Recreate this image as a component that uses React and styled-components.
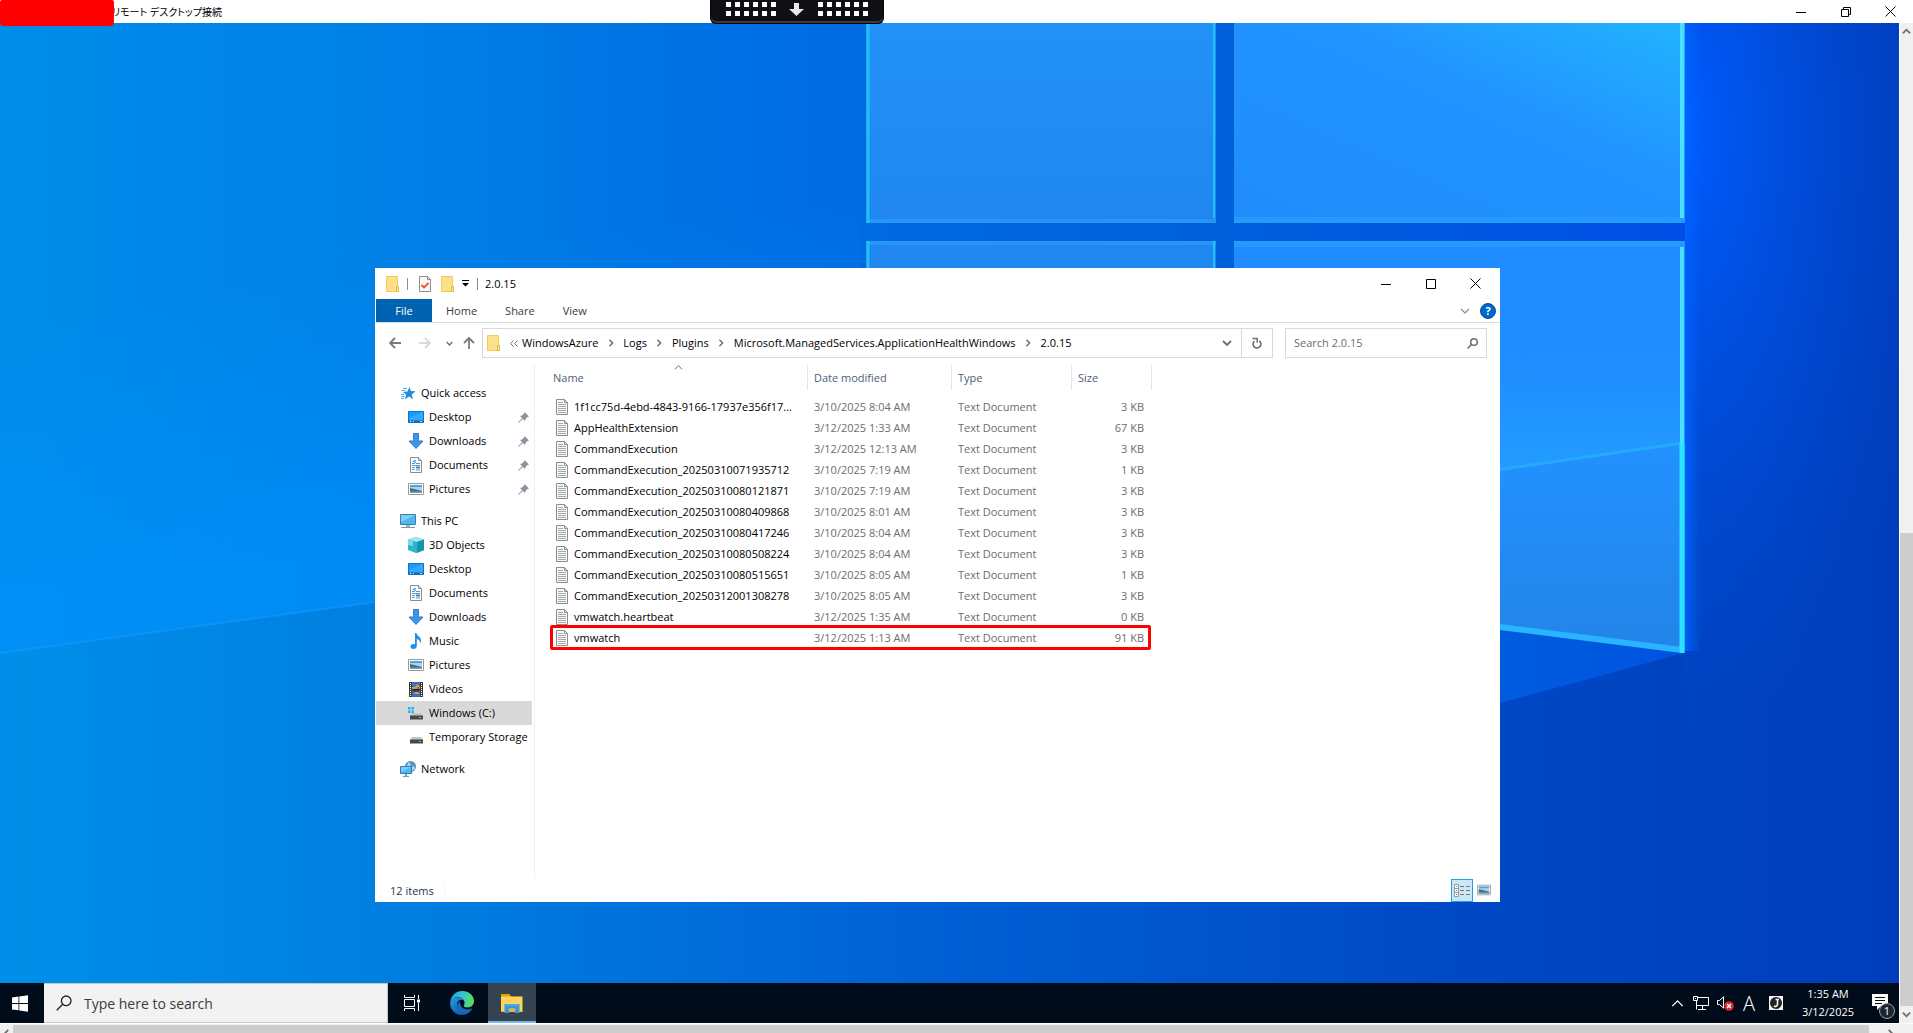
import React from 'react';
import styled, { createGlobalStyle } from 'styled-components';

const GlobalStyle = createGlobalStyle`
  * {
    box-sizing: border-box;
  }

  body {
    margin: 0;
    overflow: hidden;
    font-family: "Open Sans", "Noto Sans", sans-serif;
    font-size: 11px;
    color: #000;
  }

  button, input {
    margin: 0;
    padding: 0;
    border: 0;
    background: none;
    font: inherit;
    color: inherit;
  }

  svg {
    display: block;
    flex: none;
  }
`;

const Client = styled.div`
  display: flex;
  flex-direction: column;
  height: 100vh;
  background: #fff;
`;

const ClientTitleBar = styled.header`
  position: relative;
  display: flex;
  align-items: center;
  height: 23px;
  flex: none;
`;

const Redaction = styled.div`
  position: absolute;
  z-index: 2;
  top: 0;
  left: 0;
  width: 114px;
  height: 26px;
  border-radius: 2px 2px 4px 4px;
  background: #f00;
`;

const ClientTitle = styled.h1`
  flex: 1;
  margin: 0;
  padding-left: 112px;
  font-family: "Open Sans", "Noto Sans CJK JP", sans-serif;
  font-feature-settings: "palt";
  font-size: 10px;
  font-weight: 400;
  line-height: 16px;
`;

const ConnectionBar = styled.div`
  position: absolute;
  z-index: 2;
  top: 0;
  left: calc(50% - 247px);
  display: flex;
  align-items: center;
  justify-content: space-between;
  width: 174px;
  height: 24px;
  padding: 0 15px 5px;
  border: 1px solid #05050a;
  border-top: 0;
  border-radius: 0 0 6px 6px;
  background: #101014;
  box-shadow: inset 0 -2px 0 #3c3c40;
`;

const CaptionButton = styled.button`
  display: flex;
  align-items: center;
  justify-content: center;
  width: 45px;
  height: 100%;
`;

const ClientBody = styled.div`
  display: flex;
  flex: 1;
  min-height: 0;
`;

const Session = styled.div`
  display: flex;
  flex-direction: column;
  flex: 1;
  min-width: 0;
`;

const VerticalScroll = styled.div`
  display: flex;
  flex-direction: column;
  width: 14px;
  padding-left: 1px;
  background: #fff;
`;

const HorizontalScroll = styled.div`
  display: flex;
  height: 10px;
  flex: none;
  padding: 1px 14px 0 0;
  overflow: hidden;
  background: #f0f0f0;
  border-top: 1px solid #fff;
`;

const ScrollButton = styled.button`
  display: flex;
  align-items: center;
  justify-content: center;
  flex: none;
  width: ${props => props.$width || '13px'};
  height: 17px;
  background: #f0f0f0;
`;

const Track = styled.div`
  flex: ${props => props.$grow};
  background: #f0f0f0;
`;

const Thumb = styled.div`
  flex: ${props => props.$grow};
  background: #cdcdcd;
`;

const Desktop = styled.main`
  position: relative;
  flex: 1;
  overflow: hidden;
  background: #0078e4;
`;

const WallpaperArt = styled.svg`
  position: absolute;
  width: 100%;
  height: 100%;
`;

const ExplorerWindow = styled.section`
  position: absolute;
  top: 245px;
  left: 375px;
  display: flex;
  flex-direction: column;
  width: 1125px;
  height: 634px;
  background: #fff;
`;

const WindowTitleBar = styled.div`
  display: flex;
  align-items: center;
  height: 31px;
  padding-left: 11px;
`;

const QuickTools = styled.div`
  display: flex;
  align-items: center;
  gap: 8px;
`;

const Divider = styled.span`
  width: 1px;
  height: 12px;
  background: #8c8c8c;
`;

const WindowTitle = styled.h2`
  flex: 1;
  margin: 0 0 0 7px;
  font-size: 11px;
  font-weight: 400;
`;

const Captions = styled.div`
  display: flex;
  height: 100%;
  padding-right: 2px;
`;

const Ribbon = styled.nav`
  display: flex;
  height: 24px;
  padding-left: 1px;
  border-bottom: 1px solid #dadbdc;
`;

const RibbonTab = styled.button`
  height: 23px;
  padding: 0 14px;
  color: #3b3b3b;
`;

const FileTab = styled(RibbonTab)`
  width: 56px;
  background: #0063b1;
  color: #fff;
`;

const RibbonTools = styled.div`
  display: flex;
  align-items: center;
  gap: 10px;
  margin-left: auto;
  padding-right: 4px;
`;

const HelpButton = styled.button`
  width: 16px;
  height: 16px;
  border: 1px solid #0a4a9c;
  border-radius: 50%;
  background: #0066cc;
  color: #fff;
  font-weight: 700;
  line-height: 14px;
`;

const NavigationBar = styled.div`
  display: flex;
  padding: 5px 13px 7px 5px;
`;

const NavButton = styled.button`
  display: flex;
  align-items: center;
  justify-content: center;
  width: ${props => props.$width};
`;

const AddressBar = styled.div`
  display: flex;
  align-items: center;
  flex: 1;
  height: 30px;
  margin: 0 12px 0 2px;
  padding-left: 4px;
  border: 1px solid #d9d9d9;
`;

const Crumbs = styled.div`
  display: flex;
  align-items: center;
  flex: 1;
  padding-left: 6px;

  button {
    padding-bottom: 2px;
  }
`;

const CrumbArrow = styled.span`
  display: flex;
  justify-content: center;
  width: ${props => props.$first ? '16px' : '25px'};
`;

const RefreshButton = styled.button`
  display: flex;
  align-items: center;
  justify-content: center;
  width: 31px;
  height: 28px;
  border-left: 1px solid #d9d9d9;
`;

const SearchBox = styled.label`
  display: flex;
  align-items: center;
  width: 202px;
  height: 30px;
  padding: 0 8px;
  border: 1px solid #d9d9d9;

  input {
    flex: 1;
    min-width: 0;
    padding-bottom: 2px;
    outline: 0;
  }

  input::placeholder {
    color: #6d6d6d;
  }
`;

const WindowBody = styled.div`
  display: flex;
  flex: 1;
  min-height: 0;
`;

const Sidebar = styled.aside`
  display: flex;
  flex-direction: column;
  gap: 8px;
  width: 160px;
  padding: 16px 2px 0 1px;
  border-right: 1px solid #f0f0f0;
`;

const SidebarItem = styled.button`
  display: flex;
  align-items: center;
  gap: 5px;
  width: 156px;
  height: 24px;
  padding: 0 3px 0 ${props => props.$nested ? '32px' : '24px'};
  background: ${props => props.$selected ? '#d9d9d9' : 'none'};
  white-space: nowrap;
  text-align: left;

  span {
    flex: 1;
    padding-bottom: 2px;
  }
`;

const FileArea = styled.div`
  flex: 1;
  padding-left: 15px;
`;

const FileTable = styled.table`
  width: 601px;
  border-collapse: separate;
  border-spacing: 0;
  table-layout: fixed;

  th {
    padding: 0 0 6px;
    font-weight: 400;
  }

  td {
    height: 21px;
    padding: 0 7px;
    color: #6d6d6d;
    line-height: 16px;
    white-space: nowrap;
  }

  td:last-child {
    text-align: right;
  }
`;

const ColumnButton = styled.button`
  position: relative;
  width: 100%;
  height: 25px;
  padding-left: ${props => props.$first ? '3px' : '7px'};
  box-shadow: 1px 0 #e5e5e5;
  color: #4c607a;
  text-align: left;

  svg {
    position: absolute;
    top: -2px;
    left: 124px;
  }
`;

const FileRow = styled.tr`
  position: relative;

  &::after {
    content: "";
    display: ${props => props.$marked ? 'block' : 'none'};
    position: absolute;
    inset: -2px 0;
    border: 3px solid #f00;
    border-radius: 2px;
  }
`;

const FileName = styled.div`
  display: flex;
  align-items: center;
  gap: 6px;
  margin-left: -1px;
  color: #000;
`;

const StatusBar = styled.footer`
  display: flex;
  align-items: center;
  height: 24px;
  padding: 0 5px 0 15px;
  color: #26364d;
`;

const ItemCount = styled.span`
  padding-right: 10px;
  border-right: 1px solid #f5f5f5;
`;

const ViewButton = styled.button`
  display: flex;
  align-items: center;
  justify-content: center;
  width: 22px;
  height: 23px;
  border: 1px solid ${props => props.$active ? '#26a0da' : 'transparent'};
  background: ${props => props.$active ? '#cbe8f6' : 'none'};

  &:first-of-type {
    margin-left: auto;
  }
`;

const Taskbar = styled.footer`
  display: flex;
  height: 40px;
  flex: none;
  background: #000c1a;
  color: #fff;
`;

const TaskButton = styled.button`
  display: flex;
  align-items: center;
  justify-content: center;
  width: ${props => props.$width || '48px'};
  border-bottom: 2px solid ${props => props.$active ? '#76b9ed' : 'transparent'};
  border-top: 2px solid transparent;
  background: ${props => props.$active ? '#34434f' : 'none'};
`;

const TaskSearch = styled.label`
  display: flex;
  align-items: center;
  gap: 12px;
  width: 344px;
  margin-left: 4px;
  padding-left: 12px;
  border: 1px solid #c4c8cc;
  border-left: 0;
  background: #f2f2f2;

  input {
    flex: 1;
    outline: 0;
    font-size: 14px;
  }

  input::placeholder {
    color: #3b3b3b;
    opacity: 1;
  }
`;

const Tray = styled.div`
  display: flex;
  align-items: center;
  margin-left: auto;
  padding-right: 11px;
`;

const TrayButton = styled.button`
  display: flex;
  align-items: center;
  justify-content: center;
  width: ${props => props.$width || '24px'};
  height: 100%;
`;

const ImeMode = styled(TrayButton)`
  font-size: 20px;
  font-weight: 300;
`;

const Clock = styled.time`
  width: 74px;
  line-height: 18px;
  text-align: center;
`;

const Notifications = styled.button`
  position: relative;
  height: 100%;
  padding: 0 0 2px 7px;
`;

const Badge = styled.span`
  position: absolute;
  right: -7px;
  bottom: 4px;
  width: 16px;
  height: 16px;
  border: 1px solid #9aa0a6;
  border-radius: 50%;
  background: #1d242c;
  line-height: 14px;
`;

const Chevron = ({ direction = 'down', size = 10, color = '#6d6d6d', weight = 1.5 }) => {
  const points = {
    down: '1,3 5,7 9,3',
    up: '1,7 5,3 9,7',
    left: '7,1 3,5 7,9',
    right: '3,1 7,5 3,9',
  };
  return (
    <svg width={size} height={size} viewBox="0 0 10 10" fill="none" stroke={color} strokeWidth={weight}>
      <polyline points={points[direction]} />
    </svg>
  );
};

const MinimizeIcon = () => (
  <svg width="10" height="10" viewBox="0 0 10 10"><path d="M0 5h10v1H0z" /></svg>
);

const MaximizeIcon = () => (
  <svg width="10" height="10" viewBox="0 0 10 10" fill="none" stroke="#000"><path d="M.5.5h9v9h-9z" /></svg>
);

const RestoreIcon = () => (
  <svg width="10" height="10" viewBox="0 0 10 10" fill="none" stroke="#000">
    <path d="M.5 2.500h7v7h-7zM2.500 2.500v-2h7v7h-2" />
  </svg>
);

const CloseIcon = () => (
  <svg width="11" height="11" viewBox="0 0 11 11" fill="none" stroke="#000"><path d="M.5.5l10 10M10.500.5l-10 10" /></svg>
);

const Grip = () => (
  <svg width="50" height="14" viewBox="0 0 50 14" fill="#fff">
    {[0, 9, 18, 27, 36, 45].map(x => (
      <path key={x} d={`M${x} 0h5v5h-5zM${x} 9h5v5h-5z`} />
    ))}
  </svg>
);

const FolderIcon = () => (
  <svg width="13" height="16" viewBox="0 0 13 16">
    <path d="M.5.5h11v15H.5z" fill="#ffe08a" stroke="#f0cb58" />
    <path d="M10.500 10.500h2v5h-2z" fill="#ffe9a6" stroke="#e3b93e" />
  </svg>
);

const PropertiesIcon = () => (
  <svg width="17" height="16" viewBox="-3 0 17 16">
    <path d="M.5.5h8l3 3v12H.5z" fill="#f8f8f8" stroke="#8c8c8c" />
    <path d="M8.500.5v3h3" fill="none" stroke="#8c8c8c" />
    <path d="M2.500 9l2.500 2.500 4.500-4.500" fill="none" stroke="#e8561c" strokeWidth="1.800" />
  </svg>
);

const ToolbarMenuIcon = () => (
  <svg width="7" height="7" viewBox="0 0 7 7"><path d="M0 0h7v1H0zM0 3h7L3.500 6.500z" /></svg>
);

const ArrowIcon = ({ rotate = 0, color = '#7a7a7a' }) => (
  <svg width="12" height="12" viewBox="0 0 12 12" fill="none" stroke={color} strokeWidth="1.800">
    <path d="M12 6H1.500M6 1L1 6l5 5" transform={`rotate(${rotate} 6 6)`} />
  </svg>
);

const DoubleChevron = () => (
  <svg width="8" height="7" viewBox="0 0 8 7" fill="none" stroke="#6d6d6d">
    <path d="M3.500.5l-3 3 3 3M7.500.5l-3 3 3 3" />
  </svg>
);

const RefreshIcon = () => (
  <svg width="10" height="12" viewBox="0 0 10 12" fill="none" stroke="#707070" strokeWidth="1.700">
    <path d="M7.300 3.900A3.900 3.900 0 1 1 2.400 4.100" />
    <path d="M.5 1.500h4.700v4.300" strokeWidth="1.500" />
  </svg>
);

const MagnifierIcon = ({ size = 11, color = '#6d6d6d', weight = 1.5 }) => (
  <svg width={size} height={size} viewBox="0 0 11 11" fill="none" stroke={color} strokeWidth={weight}>
    <circle cx="7" cy="4" r="3.300" />
    <path d="M4.600 6.400L.5 10.500" />
  </svg>
);

const StarIcon = () => (
  <svg width="16" height="16" viewBox="0 0 16 16">
    <path d="M9.500 2l1.400 4 4.600.2-3.700 3.200 1.200 4.800L9 11.500l-4.200 3 1.300-4.700L3 7l4.400-.6z" fill="#1f8de0" />
    <path d="M3 3.500h4M1.500 5.500h4M1 9.500h3M1.500 11.500h3M1 13.500h3" stroke="#58aee8" />
  </svg>
);

const DesktopIcon = () => (
  <svg width="16" height="16" viewBox="0 0 16 16">
    <path d="M.5 2.500h15v11H.5z" fill="#1a9bff" stroke="#0a73c9" />
    <path d="M1 9l14-6v8.500H1z" fill="#35aaff" />
    <path d="M1 11.500h14v1.500H1z" fill="#0d69b8" />
    <path d="M2 12.500h1.500M5 12.500h1M12 12.500h2" stroke="#bfe2ff" />
  </svg>
);

const DownloadIcon = () => (
  <svg width="16" height="16" viewBox="0 0 16 16">
    <path d="M5.500.5h5v7.500h4.500L8 15.500 1 8h4.500z" fill="#3c96e4" stroke="#2c80cc" />
  </svg>
);

const DocumentIcon = () => (
  <svg width="16" height="16" viewBox="0 0 16 16">
    <path d="M2.500.5h8l3 3v12h-11z" fill="#fff" stroke="#8c8c8c" />
    <path d="M10.500.5v3h3" fill="#ddd" stroke="#8c8c8c" />
    <path d="M4 6.500h3M8 6.500h4M4 8.500h8M4 10.500h3M4 12.500h3" stroke="#4a9fe0" />
    <path d="M5 5l2-2v3" fill="none" stroke="#2b83cc" />
    <path d="M8 9.500h4v2H8z" fill="#4a7fb4" />
    <path d="M8 13h4" stroke="#8c8c8c" />
  </svg>
);

const PictureIcon = ({ width = 16 }) => (
  <svg width={width} height={width} viewBox="0 0 16 16">
    <path d="M.5 2.500h15v11H.5z" fill="#fff" stroke="#9a9a9a" />
    <path d="M2 4h12v8H2z" fill="#a9d3f5" />
    <path d="M2 4h12v2H2z" fill="#5a9fe0" />
    <path d="M2 7l4 1 8 2v2H2z" fill="#45735f" />
    <path d="M2 10.500h12V12H2z" fill="#6fa3c8" />
  </svg>
);

const ComputerIcon = () => (
  <svg width="16" height="16" viewBox="0 0 16 16">
    <path d="M.5 1.500h15v10H.5z" fill="#4fb4f0" stroke="#3a7fae" />
    <path d="M1 2h14L1 9z" fill="#80cdf8" />
    <path d="M6 12h4v2H6z" fill="#9bb4c4" />
    <path d="M1 14.500h14" stroke="#7f98a8" />
  </svg>
);

const CubeIcon = () => (
  <svg width="16" height="16" viewBox="0 0 16 16">
    <path d="M8 0l8 2.500v10.500L8 16 0 13V2.500z" fill="#2db5cc" />
    <path d="M8 0l8 2.500L9 5 0 2.500z" fill="#a5e8f0" />
    <path d="M9 5l7-2.500V13l-7 3z" fill="#1593ae" />
    <path d="M0 2.500L5 4v5L0 8z" fill="#79d8e4" />
  </svg>
);

const MusicIcon = () => (
  <svg width="16" height="16" viewBox="0 0 16 16" fill="#1e90e6">
    <path d="M7 0h1.500c.5 3 4.500 3.500 4.500 7.500 0 1-.4 2-1 3 .3-2.500-1-4-3.200-4.500V13c0 1.800-1.500 3-3.500 3S2.500 15 2.500 13.500 4 11 5.500 11c.6 0 1.100.1 1.500.3z" />
  </svg>
);

const VideoIcon = () => (
  <svg width="16" height="16" viewBox="0 0 16 16">
    <path d="M1 1h14v15H1z" fill="#3c3c3c" />
    <path d="M4 1h8v15H4z" fill="#3d6cc0" />
    <path d="M4 6h3l2-3 3 3v2H4zM6 12l3-2 3 3H7z" fill="#d9a23a" />
    <path d="M5 9h6v2H5z" fill="#33406b" />
    <path d="M9 6h2v3H9z" fill="#c9473a" />
    <path d="M2.500 2v14M13.500 2v14" stroke="#fff" strokeDasharray="1 1" />
    <path d="M4 8.500h8" stroke="#1e1e1e" />
  </svg>
);

const DriveIcon = ({ system }) => (
  <svg width="16" height="16" viewBox="0 0 16 16">
    {system && <path d="M0 2h2.500v2.500H0zM3.500 2H6v2.500H3.500zM0 5.500h2.500V8H0zM3.500 5.500H6V8H3.500z" fill="#1eb4f0" />}
    <path d="M4 8h9l2 3H2z" fill="#c4c4c4" />
    <path d="M2 10.500h13v4H2z" fill="#484848" />
    <path d="M11 12.500h2" stroke="#4fd66c" />
  </svg>
);

const NetworkIcon = () => (
  <svg width="16" height="16" viewBox="0 0 16 16">
    <circle cx="10.500" cy="5.500" r="5.500" fill="#5b92b8" />
    <path d="M8 1.500l3 1-1 2.500-3 .5zM11 6l3-1 1 3-3 2z" fill="#b4d8ea" />
    <path d="M.5 5.500h11v7H.5z" fill="#4fb8f4" stroke="#2d7db4" />
    <path d="M1 6h10l-10 5z" fill="#7fd0fa" />
    <path d="M5 13h2v2H5zM3 15h6v1H3z" fill="#7f98a8" />
  </svg>
);

const PinIcon = () => (
  <svg width="11" height="11" viewBox="0 0 11 11" fill="#8a949e">
    <path d="M6.500 0L11 4.500 9.500 5 7.500 7 7 9 4.800 6.900.5 11 0 10.500 4.100 6.200 2 4l2-.5 2-2z" />
  </svg>
);

const TextFileIcon = () => (
  <svg width="12" height="16" viewBox="0 0 12 16">
    <path d="M.5.5h8l3 3v12H.5z" fill="#fafafa" stroke="#8c8c8c" />
    <path d="M8.500.5v3h3" fill="none" stroke="#8c8c8c" />
    <path d="M2 3.500h5M2 5.500h8M2 7.500h8M2 9.500h8M2 11.500h8M2 13.500h8" stroke="#a6a6a6" />
  </svg>
);

const DetailsViewIcon = () => (
  <svg width="16" height="13" viewBox="0 0 16 13" fill="none">
    <path d="M.5.5h4v12h-4zM.5 4.500h4M.5 8.500h4" fill="#fff" stroke="#8f9aa1" />
    <path d="M2 2.500h1M2 6.500h1" stroke="#4a90c8" />
    <path d="M2 10.500h1" stroke="#c33" />
    <path d="M6 2.500h4M12 2.500h4M6 6.500h4M12 6.500h4M6 10.500h4M12 10.500h4" stroke="#777" />
  </svg>
);

const WindowsLogo = () => (
  <svg width="16" height="17" viewBox="0 0 16 17" fill="#fff">
    <path d="M0 2.500L6.500 1.600V8H0zM7.300 1.500L16 .2V8H7.300zM0 8.900h6.500v6.400L0 14.400zM7.300 8.900H16v7.900l-8.700-1.300z" />
  </svg>
);

const TaskViewIcon = () => (
  <svg width="16" height="16" viewBox="0 0 16 16" fill="none" stroke="#fff">
    <path d="M.5 0v2.500h10V0M.5 4.500h10v7H.5zM.5 16v-2.500h10V16M14.500 0v4M14.500 8v8" />
    <path d="M13 4.500h3v3h-3z" fill="#fff" stroke="none" />
  </svg>
);

const EdgeIcon = () => (
  <svg width="24" height="24" viewBox="0 0 24 24">
    <defs>
      <linearGradient id="edgeTop" x1="0" y1="0.300" x2="1" y2="0.500">
        <stop offset="0" stopColor="#229fe2" />
        <stop offset="0.500" stopColor="#34c6cf" />
        <stop offset="1" stopColor="#62dc55" />
      </linearGradient>
      <linearGradient id="edgeLeft" x1="0" y1="0" x2="0.700" y2="1">
        <stop offset="0" stopColor="#1ea0e6" />
        <stop offset="1" stopColor="#0f58a8" />
      </linearGradient>
    </defs>
    <path d="M.2 11.200C1 4.500 6 0 12.200 0 19 0 24 4.700 24 10c0 4-3 6.400-6.400 6.400-2.500 0-4-.9-4-1.700 0-.7 1-1 1-3 0-3-3-5.500-6.800-5.500-3.500 0-6.400 2-7.600 5z" fill="url(#edgeTop)" />
    <path d="M.2 11.200c1-3 3.800-5 7.600-5 3 0 5.600 1.500 6.500 3.600-1-.7-2-1-3-1C8.500 8.800 7 11 7 14c0 5 4 9 9 9.200-1.200.5-2.500.8-4 .8C5.300 24-.5 18.500.2 11.200z" fill="url(#edgeLeft)" />
    <path d="M10 10c-2 1.500-3 3.300-3 5.500 0 4.500 4 8 9 7.700 2.500-1 4.800-3 5.800-5 .3-.6-.2-1-.8-.7-5 2.500-11.500-.5-11-7.500z" fill="#1a66bb" />
  </svg>
);

const ExplorerIcon = () => (
  <svg width="22" height="19" viewBox="0 0 22 19">
    <path d="M0 0h8l2 2.500h11.500V18H0z" fill="#ffd35c" />
    <path d="M0 0h8l2 2.500H0z" fill="#e8a200" />
    <path d="M3.500 10h15v9H14v-4.500H8V19H3.500z" fill="#3a96dd" />
    <path d="M3.500 10h15v2h-15z" fill="#4fa8ea" />
    <path d="M0 18h3.500V17H0zM18.500 18h3V17h-3zM8 18h6v-3H8z" fill="#f3b52c" />
  </svg>
);

const MonitorIcon = () => (
  <svg width="16" height="14" viewBox="0 0 16 14" fill="none" stroke="#fff">
    <path d="M5 1.500h10.500v8H3.500V5M.5.5h4v4h-4zM2 2.500h1M9.500 10v3M5 13.500h8M3.500 9v4.500" />
  </svg>
);

const MutedIcon = () => (
  <svg width="17" height="15" viewBox="0 0 17 15">
    <path d="M.5 4.500h2L6.500.8v11.400l-4-3.700h-2z" fill="none" stroke="#fff" />
    <circle cx="12" cy="10" r="4.800" fill="#e0202c" />
    <path d="M10 8l4 4M14 8l-4 4" stroke="#fff" strokeWidth="1.500" />
  </svg>
);

const ImeIcon = () => (
  <svg width="14" height="14" viewBox="0 0 14 14">
    <path d="M0 0h14v14H0z" fill="#f5f5f5" />
    <circle cx="7" cy="7" r="6" fill="#222" />
    <path d="M8.500 3v5.500a2.300 2.300 0 0 1-3.500 1.500M6.500 3.500h3.500" fill="none" stroke="#f5f5f5" strokeWidth="1.600" />
  </svg>
);

const NoticeIcon = () => (
  <svg width="16" height="16" viewBox="0 0 16 16">
    <path d="M0 0h16v12H9l-4 4v-4H0z" fill="#fff" />
    <path d="M3 3.500h10M3 6.500h10M3 9.500h7" stroke="#000c1a" />
  </svg>
);

const Wallpaper = () => (
  <WallpaperArt viewBox="0 0 1899 960" preserveAspectRatio="none" aria-hidden="true">
    <defs>
      <linearGradient id="sky" gradientUnits="userSpaceOnUse" x1="0" y1="0" x2="1685" y2="0">
        <stop offset="0" stopColor="#008de9" />
        <stop offset="0.250" stopColor="#007fe6" />
        <stop offset="0.500" stopColor="#006be3" />
        <stop offset="0.720" stopColor="#0060dc" />
        <stop offset="1" stopColor="#004ee6" />
      </linearGradient>
      <linearGradient id="ground" x1="0" y1="0" x2="1" y2="0">
        <stop offset="0" stopColor="#008fe8" />
        <stop offset="0.250" stopColor="#007bdf" />
        <stop offset="0.500" stopColor="#005fd4" />
        <stop offset="0.780" stopColor="#0048c4" />
        <stop offset="1" stopColor="#003dba" />
      </linearGradient>
      <linearGradient id="beam" gradientUnits="userSpaceOnUse" x1="0" y1="290" x2="39" y2="577">
        <stop offset="0" stopColor="#0092ff" stopOpacity="0" />
        <stop offset="1" stopColor="#0092ff" stopOpacity="0.600" />
      </linearGradient>
      <radialGradient id="glow" gradientUnits="userSpaceOnUse" cx="0" cy="0" r="1" gradientTransform="translate(1685 110) scale(260 620)">
        <stop offset="0" stopColor="#005cff" />
        <stop offset="0.300" stopColor="#0054ee" stopOpacity="0.800" />
        <stop offset="1" stopColor="#004cd8" stopOpacity="0" />
      </radialGradient>
      <linearGradient id="rim" x1="0" y1="0" x2="1" y2="0">
        <stop offset="0" stopColor="#0064ff" stopOpacity="0.800" />
        <stop offset="1" stopColor="#0064ff" stopOpacity="0" />
      </linearGradient>
      <linearGradient id="paneTop" x1="0" y1="1" x2="1" y2="0">
        <stop offset="0" stopColor="#208cfa" />
        <stop offset="0.600" stopColor="#2194ff" />
        <stop offset="1" stopColor="#22b4ff" />
      </linearGradient>
      <linearGradient id="paneLeft" x1="0" y1="0" x2="0" y2="1">
        <stop offset="0" stopColor="#2292f8" />
        <stop offset="1" stopColor="#2086f0" />
      </linearGradient>
      <linearGradient id="paneUpper" x1="0" y1="0" x2="0" y2="1">
        <stop offset="0" stopColor="#208aff" />
        <stop offset="0.500" stopColor="#208eff" />
        <stop offset="1" stopColor="#22a2ff" />
      </linearGradient>
      <linearGradient id="paneLower" x1="0" y1="0" x2="0" y2="1">
        <stop offset="0" stopColor="#2292ff" />
        <stop offset="1" stopColor="#2284e8" />
      </linearGradient>
      <linearGradient id="triangle" x1="0" y1="0" x2="1" y2="0">
        <stop offset="0" stopColor="#0068dc" />
        <stop offset="1" stopColor="#0052e0" />
      </linearGradient>
    </defs>
    <rect width="1899" height="960" fill="url(#ground)" />
    <path d="M0 0H1685V400L0 630z" fill="url(#sky)" />
    <path d="M0 630L860 513V150L0 267z" fill="url(#beam)" />
    <path d="M0 630L860 513" stroke="#1a9cff" strokeWidth="2" opacity="0.500" />
    <rect x="1685" width="214" height="730" fill="url(#glow)" />
    <rect x="1685" width="16" height="628" fill="url(#rim)" />

    <rect x="866" width="350" height="200" fill="url(#paneLeft)" />
    <rect x="866" y="218" width="350" height="380" fill="#2086f0" />
    <rect x="1234" width="451" height="200" fill="url(#paneTop)" />
    <path d="M1234 218h451v201L1234 485z" fill="url(#paneUpper)" />
    <path d="M1234 485L1685 419V630L1234 580z" fill="url(#paneLower)" />
    <path d="M1234 485L1683 420" stroke="#28b0ff" strokeWidth="3" opacity="0.800" />
    <path d="M866 198h350M866 220h350" stroke="#2b9cf8" strokeWidth="4" opacity="0.700" />
    <path d="M1234 197h451M1234 221h451" stroke="#279efc" strokeWidth="6" opacity="0.800" />
    <path d="M868 0v200M868 218v30" stroke="#22c0f8" strokeWidth="3" />
    <path d="M1214 0v195M1214 218v30" stroke="#22c0fa" strokeWidth="2" />
    <path d="M1682 0v195M1682 224v200" stroke="#4ae0ff" strokeWidth="4" />
    <path d="M1300 582L1500 604 1684 627V630L1500 680 1300 735z" fill="url(#triangle)" />
    <path d="M1300 582L1500 604 1682 627" fill="none" stroke="#28b4ff" strokeWidth="6" />
    <path d="M1682 420v210" stroke="#28e4ff" strokeWidth="5" />
  </WallpaperArt>
);

const quickAccess = [
  { name: 'Quick access', icon: <StarIcon /> },
  { name: 'Desktop', icon: <DesktopIcon />, nested: true, pinned: true },
  { name: 'Downloads', icon: <DownloadIcon />, nested: true, pinned: true },
  { name: 'Documents', icon: <DocumentIcon />, nested: true, pinned: true },
  { name: 'Pictures', icon: <PictureIcon />, nested: true, pinned: true },
];

const thisPc = [
  { name: 'This PC', icon: <ComputerIcon /> },
  { name: '3D Objects', icon: <CubeIcon />, nested: true },
  { name: 'Desktop', icon: <DesktopIcon />, nested: true },
  { name: 'Documents', icon: <DocumentIcon />, nested: true },
  { name: 'Downloads', icon: <DownloadIcon />, nested: true },
  { name: 'Music', icon: <MusicIcon />, nested: true },
  { name: 'Pictures', icon: <PictureIcon />, nested: true },
  { name: 'Videos', icon: <VideoIcon />, nested: true },
  { name: 'Windows (C:)', icon: <DriveIcon system />, nested: true, selected: true },
  { name: 'Temporary Storage', icon: <DriveIcon />, nested: true },
];

const network = [{ name: 'Network', icon: <NetworkIcon /> }];

const path = ['WindowsAzure', 'Logs', 'Plugins', 'Microsoft.ManagedServices.ApplicationHealthWindows', '2.0.15'];

const files = [
  ['1f1cc75d-4ebd-4843-9166-17937e356f17...', '3/10/2025 8:04 AM', '3 KB'],
  ['AppHealthExtension', '3/12/2025 1:33 AM', '67 KB'],
  ['CommandExecution', '3/12/2025 12:13 AM', '3 KB'],
  ['CommandExecution_20250310071935712', '3/10/2025 7:19 AM', '1 KB'],
  ['CommandExecution_20250310080121871', '3/10/2025 7:19 AM', '3 KB'],
  ['CommandExecution_20250310080409868', '3/10/2025 8:01 AM', '3 KB'],
  ['CommandExecution_20250310080417246', '3/10/2025 8:04 AM', '3 KB'],
  ['CommandExecution_20250310080508224', '3/10/2025 8:04 AM', '3 KB'],
  ['CommandExecution_20250310080515651', '3/10/2025 8:05 AM', '1 KB'],
  ['CommandExecution_20250312001308278', '3/10/2025 8:05 AM', '3 KB'],
  ['vmwatch.heartbeat', '3/12/2025 1:35 AM', '0 KB'],
  ['vmwatch', '3/12/2025 1:13 AM', '91 KB'],
];

const columns = [
  { name: 'Name', width: 257 },
  { name: 'Date modified', width: 144 },
  { name: 'Type', width: 120 },
  { name: 'Size', width: 80 },
];

const SidebarGroup = ({ items }) => (
  <div>
    {items.map(item => (
      <SidebarItem key={item.name} $nested={item.nested} $selected={item.selected}>
        {item.icon}
        <span>{item.name}</span>
        {item.pinned && <PinIcon />}
      </SidebarItem>
    ))}
  </div>
);

const FileList = () => (
  <FileTable>
    <colgroup>
      {columns.map(column => <col key={column.name} width={column.width} />)}
    </colgroup>
    <thead>
      <tr>
        {columns.map((column, i) => (
          <th key={column.name}>
            <ColumnButton $first={i === 0}>
              {column.name}
              {i === 0 && <Chevron direction="up" size={9} weight={1.1} />}
            </ColumnButton>
          </th>
        ))}
      </tr>
    </thead>
    <tbody>
      {files.map(([name, date, size]) => (
        <FileRow key={name} $marked={name === 'vmwatch'}>
          <td><FileName><TextFileIcon />{name}</FileName></td>
          <td>{date}</td>
          <td>Text Document</td>
          <td>{size}</td>
        </FileRow>
      ))}
    </tbody>
  </FileTable>
);

const Explorer = () => (
  <ExplorerWindow>
    <WindowTitleBar>
      <QuickTools>
        <FolderIcon />
        <Divider />
        <PropertiesIcon />
        <FolderIcon />
        <ToolbarMenuIcon />
        <Divider />
      </QuickTools>
      <WindowTitle>2.0.15</WindowTitle>
      <Captions>
        <CaptionButton aria-label="Minimize"><MinimizeIcon /></CaptionButton>
        <CaptionButton aria-label="Maximize"><MaximizeIcon /></CaptionButton>
        <CaptionButton aria-label="Close"><CloseIcon /></CaptionButton>
      </Captions>
    </WindowTitleBar>
    <Ribbon>
      <FileTab>File</FileTab>
      <RibbonTab>Home</RibbonTab>
      <RibbonTab>Share</RibbonTab>
      <RibbonTab>View</RibbonTab>
      <RibbonTools>
        <Chevron color="#8c8c8c" weight={1.2} />
        <HelpButton aria-label="Help">?</HelpButton>
      </RibbonTools>
    </Ribbon>
    <NavigationBar>
      <NavButton $width="30px" aria-label="Back"><ArrowIcon /></NavButton>
      <NavButton $width="30px" aria-label="Forward"><ArrowIcon rotate={180} color="#d9d9d9" /></NavButton>
      <NavButton $width="18px" aria-label="Recent locations"><Chevron size={7} weight={2} /></NavButton>
      <NavButton $width="22px" aria-label="Up"><ArrowIcon rotate={90} /></NavButton>
      <AddressBar>
        <FolderIcon />
        <Crumbs>
          {path.map((part, i) => (
            <React.Fragment key={part}>
              <CrumbArrow $first={i === 0}>
                {i === 0 ? <DoubleChevron /> : <Chevron direction="right" size={8} weight={1.8} />}
              </CrumbArrow>
              <button>{part}</button>
            </React.Fragment>
          ))}
        </Crumbs>
        <NavButton $width="28px" aria-label="Previous locations"><Chevron size={10} weight={1.8} /></NavButton>
        <RefreshButton aria-label="Refresh"><RefreshIcon /></RefreshButton>
      </AddressBar>
      <SearchBox>
        <input aria-label="Search 2.0.15" placeholder="Search 2.0.15" />
        <MagnifierIcon />
      </SearchBox>
    </NavigationBar>
    <WindowBody>
      <Sidebar>
        <SidebarGroup items={quickAccess} />
        <SidebarGroup items={thisPc} />
        <SidebarGroup items={network} />
      </Sidebar>
      <FileArea>
        <FileList />
      </FileArea>
    </WindowBody>
    <StatusBar>
      <ItemCount>12 items</ItemCount>
      <ViewButton $active aria-label="Details"><DetailsViewIcon /></ViewButton>
      <ViewButton aria-label="Large icons"><PictureIcon width={14} /></ViewButton>
    </StatusBar>
  </ExplorerWindow>
);

const App = () => (
  <Client>
    <GlobalStyle />
    <ClientTitleBar>
      <Redaction />
      <ClientTitle>リモート デスクトップ接続</ClientTitle>
      <ConnectionBar>
        <Grip />
        <svg width="15" height="13" viewBox="0 0 15 13" fill="#e8e8e8">
          <path d="M5 0h5v6h5l-7.500 7L0 6h5z" />
        </svg>
        <Grip />
      </ConnectionBar>
      <CaptionButton aria-label="Minimize"><MinimizeIcon /></CaptionButton>
      <CaptionButton aria-label="Restore"><RestoreIcon /></CaptionButton>
      <CaptionButton aria-label="Close"><CloseIcon /></CaptionButton>
    </ClientTitleBar>
    <ClientBody>
      <Session>
        <Desktop>
          <Wallpaper />
          <Explorer />
        </Desktop>
        <Taskbar>
          <TaskButton $width="40px" aria-label="Start"><WindowsLogo /></TaskButton>
          <TaskSearch>
            <MagnifierIcon size={16} color="#222" weight={0.9} />
            <input aria-label="Type here to search" placeholder="Type here to search" />
          </TaskSearch>
          <TaskButton aria-label="Task view"><TaskViewIcon /></TaskButton>
          <TaskButton $width="52px" aria-label="Microsoft Edge"><EdgeIcon /></TaskButton>
          <TaskButton $active aria-label="File Explorer"><ExplorerIcon /></TaskButton>
          <Tray>
            <TrayButton aria-label="Show hidden icons"><Chevron direction="up" size={13} color="#fff" weight={1} /></TrayButton>
            <TrayButton aria-label="Network"><MonitorIcon /></TrayButton>
            <TrayButton aria-label="Volume"><MutedIcon /></TrayButton>
            <ImeMode>A</ImeMode>
            <TrayButton $width="30px" aria-label="Input method"><ImeIcon /></TrayButton>
            <Clock>1:35 AM<br />3/12/2025</Clock>
            <Notifications aria-label="Notifications">
              <NoticeIcon />
              <Badge>1</Badge>
            </Notifications>
          </Tray>
        </Taskbar>
      </Session>
      <VerticalScroll>
        <ScrollButton aria-label="Scroll up"><Chevron direction="up" size={9} weight={2} /></ScrollButton>
        <Track $grow={493} />
        <Thumb $grow={473} />
        <ScrollButton aria-label="Scroll down"><Chevron size={9} weight={2} /></ScrollButton>
      </VerticalScroll>
    </ClientBody>
    <HorizontalScroll>
      <ScrollButton aria-label="Scroll left"><Chevron direction="left" size={9} weight={2} /></ScrollButton>
      <Thumb $grow={1856} />
      <Track $grow={13} />
      <ScrollButton $width="17px" aria-label="Scroll right"><Chevron direction="right" size={9} weight={2} /></ScrollButton>
    </HorizontalScroll>
  </Client>
);

export default App;
